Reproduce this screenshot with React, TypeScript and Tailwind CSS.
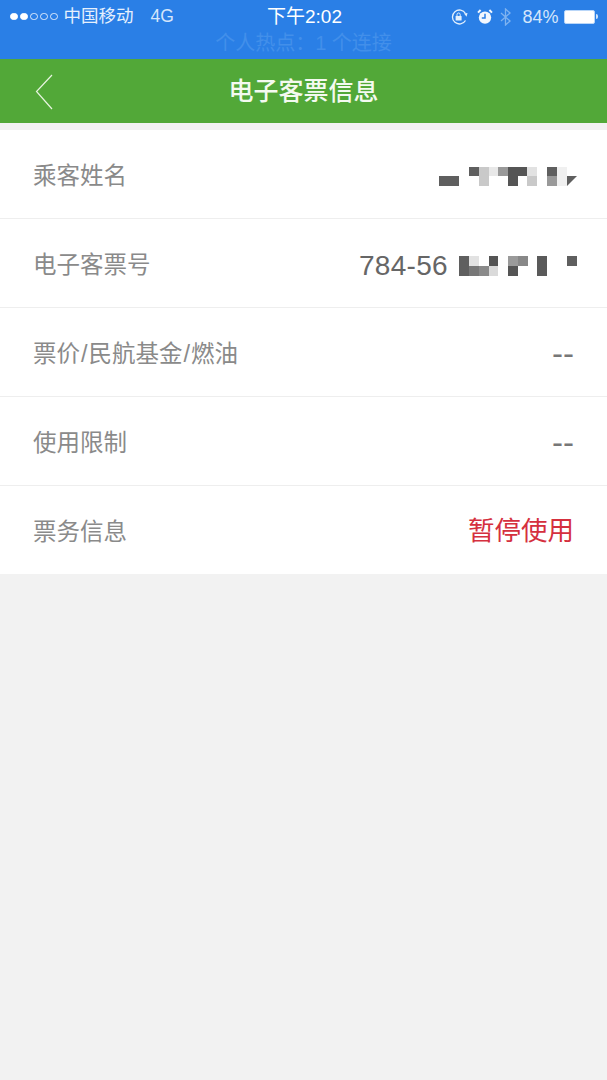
const FONT = 'font-["Liberation_Sans","Noto_Sans_CJK_SC",sans-serif]'

type Block = [number, number, number, number, string]

// redacted mosaics, coordinates are relative to each value's box
const NAME_BLOCKS: Block[] = [
  [0, 9, 20, 10, '#5f5f5f'],
  [30, 0, 10, 9, '#5f5f5f'],
  [40, 0, 10, 19, '#c9c9c9'],
  [50, 0, 9, 9, '#e8e8e8'],
  [59, 0, 10, 9, '#999999'],
  [69, 0, 19, 9, '#555555'],
  [69, 9, 10, 10, '#555555'],
  [88, 0, 10, 9, '#e2e2e2'],
  [88, 9, 10, 10, '#c9c9c9'],
  [108, 0, 10, 9, '#5f5f5f'],
  [108, 9, 10, 10, '#999999'],
  [118, 0, 10, 19, '#f0f0f0'],
]

const TICKET_BLOCKS: Block[] = [
  [0, 0, 10, 20, '#5f5f5f'],
  [10, 0, 10, 10, '#e2e2e2'],
  [10, 10, 10, 10, '#777777'],
  [20, 10, 10, 10, '#8a8a8a'],
  [30, 0, 9, 10, '#555555'],
  [30, 10, 9, 10, '#dadada'],
  [49, 0, 10, 10, '#9a9a9a'],
  [49, 10, 10, 10, '#555555'],
  [59, 0, 10, 10, '#888888'],
  [78, 0, 10, 20, '#5a5a5a'],
  [108, 0, 10, 10, '#5f5f5f'],
]

function Mosaic({ blocks, width, children }: { blocks: Block[]; width: number; children?: React.ReactNode }) {
  return (
    <svg width={width} height={20} viewBox={`0 0 ${width} 20`} className="block">
      {blocks.map(([x, y, w, h, fill], i) => (
        <rect key={i} x={x} y={y} width={w} height={h} fill={fill} />
      ))}
      {children}
    </svg>
  )
}

function SignalDots() {
  return (
    <div className="flex items-center gap-[2.5px]">
      {[true, true, false, false, false].map((on, i) => (
        <span
          key={i}
          className={`block h-[7.5px] w-[7.5px] rounded-full border border-white ${on ? 'bg-white' : 'opacity-80'}`}
        />
      ))}
    </div>
  )
}

function StatusIcons() {
  return (
    <div className="flex items-center">
      <svg width="18" height="16" viewBox="0 0 18 16" fill="none" stroke="#e4f0fd" className="mr-[9px]">
        <path d="M15.5 11.5A7 7 0 1 1 15.5 4.5" strokeWidth="1.3" />
        <path d="M14 4.5l2.6 3.3L17.5 4z" fill="#e4f0fd" stroke="none" />
        <rect x="5.6" y="7" width="6" height="4.6" rx="0.6" fill="#e4f0fd" stroke="none" />
        <path d="M7 7V5.6a1.6 1.6 0 0 1 3.2 0V7" strokeWidth="1" />
      </svg>
      <svg width="16" height="16" viewBox="0 0 16 16" className="mr-[7px]">
        <circle cx="8" cy="8.6" r="6.2" fill="#f2f7fe" />
        <path d="M8 4.8v4.2H4.8" fill="none" stroke="#2a7fe6" strokeWidth="1.5" />
        <path d="M1 3.6L3.6 1M15 3.6L12.4 1" stroke="#f2f7fe" strokeWidth="2" />
      </svg>
      <svg width="12" height="18" viewBox="0 0 12 18" fill="none" stroke="#7fb3f0" strokeWidth="1.3" className="mr-[10px]">
        <path d="M1 5l9 8-4.5 4V1L10 5l-9 8" />
      </svg>
      <span className="mr-[5px] text-[18px] leading-none text-[#d5e6fb]">84%</span>
      <div className="flex items-center">
        <div className="h-[14px] w-[31px] rounded-[2px] border border-[#b9d6f8] bg-white" />
        <div className="ml-[1.5px] h-[5px] w-[2px] rounded-r-sm bg-[#cfe2fa]" />
      </div>
    </div>
  )
}

function Row({ label, children, last }: { label: React.ReactNode; children: React.ReactNode; last?: boolean }) {
  return (
    <div className={`flex items-center justify-between pl-[33px] pr-[33px] pt-[5px] ${last ? 'h-[88px]' : 'h-[89px] border-b border-[#eeeeee]'}`}>
      <span className="text-[23.5px] leading-none text-[#8a8a8a]">{label}</span>
      {children}
    </div>
  )
}

function Dashes() {
  return <span className="-mt-[2px] text-[33px] leading-none text-[#777777]">--</span>
}

export default function App() {
  return (
    <div className={`${FONT} flex min-h-[1080px] w-[607px] flex-col bg-[#f2f2f2]`}>
      <div className="h-[59px] bg-[#2a7fe6] text-white">
        <div className="flex h-[33px] items-center pl-[10px] pr-[9px]">
          <div className="flex flex-1 items-center">
            <SignalDots />
            <span className="ml-[6px] text-[17.5px] leading-none text-[#e6f0fd]">中国移动</span>
            <span className="ml-[17px] text-[17.5px] leading-none text-[#d5e6fb]">4G</span>
          </div>
          <span className="ml-px text-[19px] leading-none">下午2:02</span>
          <div className="flex flex-1 justify-end">
            <StatusIcons />
          </div>
        </div>
        <div className="text-center text-[20px] leading-[21px] text-[#428fea]">个人热点：1 个连接</div>
      </div>

      <div className="relative flex h-[64px] items-center justify-center bg-[#52a838]">
        <svg width="18" height="36" viewBox="0 0 18 36" fill="none" stroke="#e8f5e0" strokeWidth="1.2" className="absolute left-[35px] top-[15px]">
          <path d="M17 1L1.5 17.5 17 35" />
        </svg>
        <span className="text-[25px] font-medium leading-none text-[#f4faf0]">电子客票信息</span>
      </div>

      <div className="mt-[7px] bg-white">
        <Row label="乘客姓名">
          <div className="-mr-[3px]">
            <Mosaic blocks={NAME_BLOCKS} width={138}>
              <path d="M128 19V9h10z" fill="#5f5f5f" />
            </Mosaic>
          </div>
        </Row>
        <Row label="电子客票号">
          <div className="-mr-[3px] flex items-center">
            <span className="w-[100px] whitespace-nowrap text-[28px] leading-none tracking-[0.3px] text-[#666666]">784-56</span>
            <Mosaic blocks={TICKET_BLOCKS} width={118} />
          </div>
        </Row>
        <Row
          label={
            <>
              票价<span className="mx-px">/</span>民航基金<span className="mx-px">/</span>燃油
            </>
          }
        >
          <Dashes />
        </Row>
        <Row label="使用限制">
          <Dashes />
        </Row>
        <Row label="票务信息" last>
          <span className="-mt-[2px] text-[26.5px] leading-none text-[#d5303e]">暂停使用</span>
        </Row>
      </div>
    </div>
  )
}
